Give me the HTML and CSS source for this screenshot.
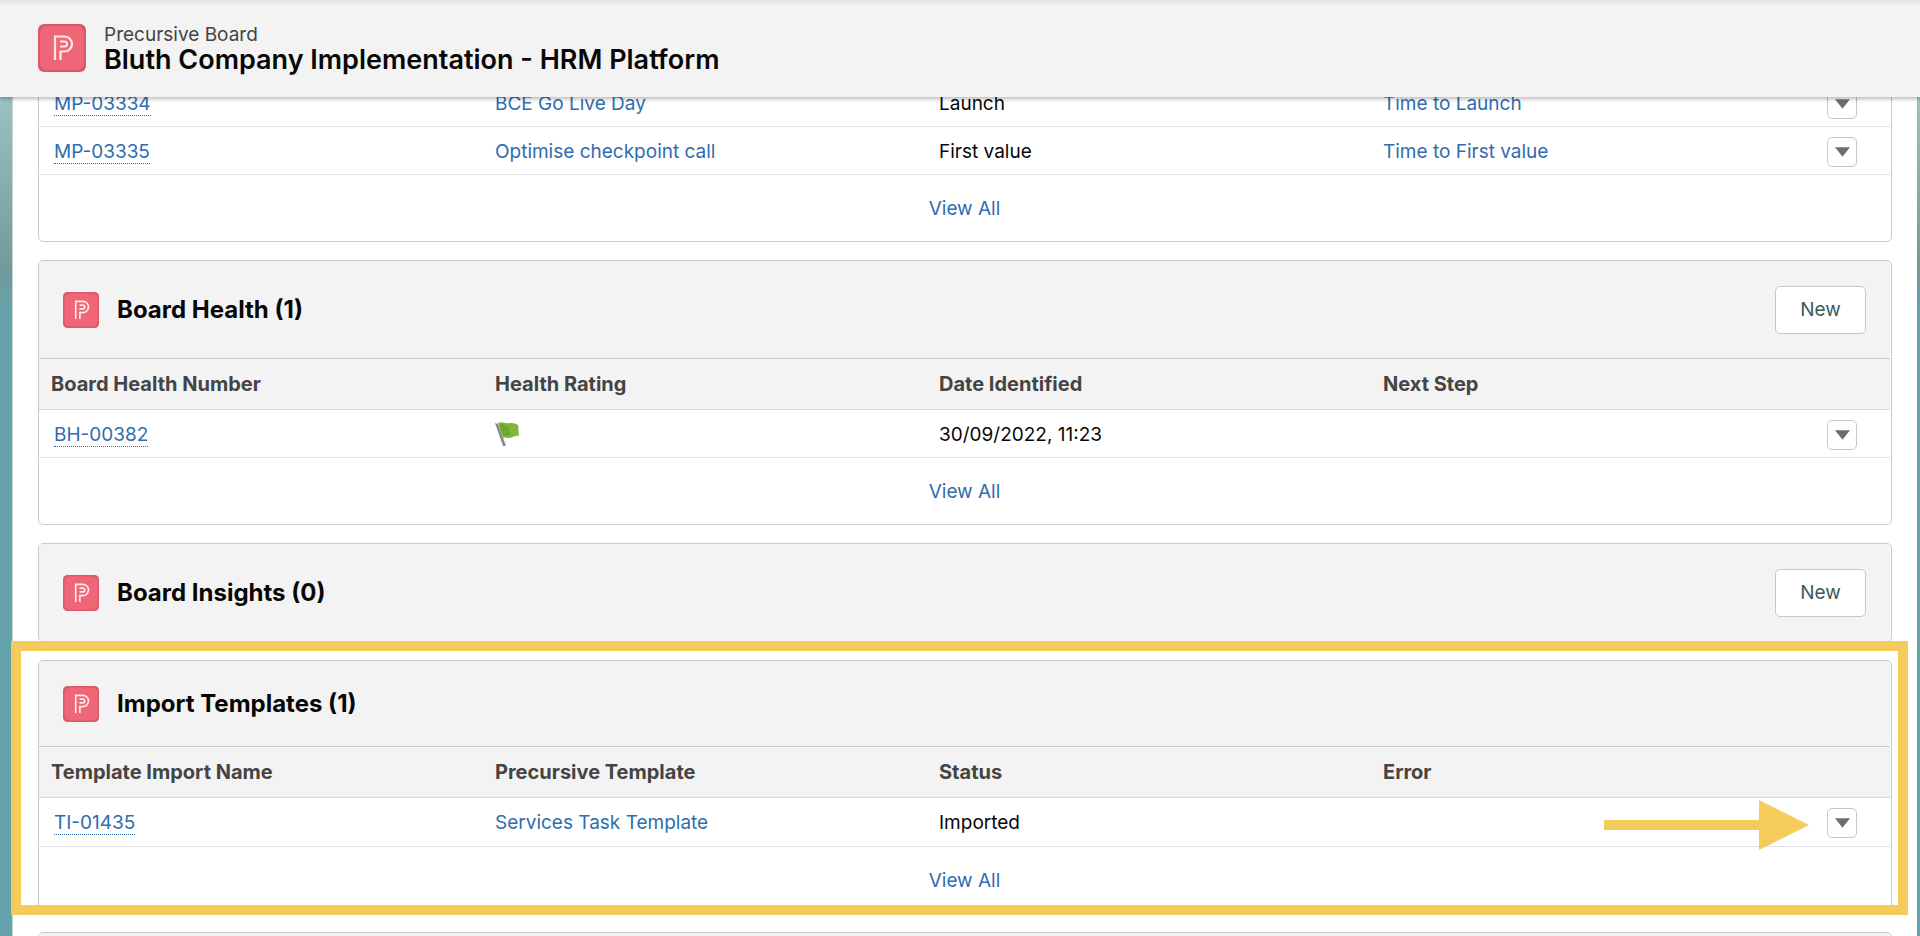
FILE: index.html
```
<!DOCTYPE html>
<html lang="en">
<head>
  <meta charset="UTF-8">
  <meta name="viewport" content="width=device-width, initial-scale=1.0">
  <title>Bluth Company Implementation - HRM Platform</title>
  <link rel="stylesheet" href="styles.css">
</head>
<body>
<!-- shared icons -->
<svg class="sprite" aria-hidden="true">
  <symbol id="logo" viewBox="0 0 48 48">
    <rect width="48" height="48" rx="6" fill="#d9586b"/>
    <rect x="2" y="2" width="44" height="44" rx="7" fill="#ef6777"/>
    <path d="M17 36V12.500H26.500a7.500 7.500 0 0 1 0 15H22.500V36M22 17.500H26.500a2.500 2.500 0 0 1 0 5H22" fill="none" stroke="#fde8ea" stroke-width="2.200"/>
  </symbol>
  <symbol id="down" viewBox="0 0 16 10">
    <path d="M0 0h16L8 10z" fill="#706e6b"/>
  </symbol>
</svg>

<header class="page-header">
  <svg class="logo-lg"><use href="#logo"/></svg>
  <div>
    <p class="entity">Precursive Board</p>
    <h1>Bluth Company Implementation - HRM Platform</h1>
  </div>
</header>

<main class="board">
  <section class="card">
    <table>
      <tbody>
        <tr>
          <td><a class="record" href="#">MP-03334</a></td>
          <td><a href="#">BCE Go Live Day</a></td>
          <td>Launch</td>
          <td><a href="#">Time to Launch</a></td>
          <td class="action"><button class="menu-btn" aria-label="Show actions"><svg><use href="#down"/></svg></button></td>
        </tr>
        <tr>
          <td><a class="record" href="#">MP-03335</a></td>
          <td><a href="#">Optimise checkpoint call</a></td>
          <td>First value</td>
          <td><a href="#">Time to First value</a></td>
          <td class="action"><button class="menu-btn" aria-label="Show actions"><svg><use href="#down"/></svg></button></td>
        </tr>
      </tbody>
    </table>
    <div class="card-footer"><a href="#">View All</a></div>
  </section>

  <section class="card">
    <div class="card-header">
      <svg class="logo"><use href="#logo"/></svg>
      <h2>Board Health (1)</h2>
      <button class="new-btn">New</button>
    </div>
    <table>
      <thead>
        <tr>
          <th>Board Health Number</th>
          <th>Health Rating</th>
          <th>Date Identified</th>
          <th>Next Step</th>
          <th class="action"></th>
        </tr>
      </thead>
      <tbody>
        <tr>
          <td><a class="record" href="#">BH-00382</a></td>
          <td>
            <svg class="flag" viewBox="0 0 26 26" role="img" aria-label="Green">
              <path d="M0 1l3 1 8 22H8z" fill="#8a8a8a"/>
              <path d="M3 1c4-2 7 1 11 0 3 0 6 0 9 2l1 11c-4-1-6 2-10 2-3 0-4-1-6 0z" fill="#7db83a"/>
              <path d="M4 3c4-1 6 0 9 1l2 9c-3 1-4 1-7 1z" fill="#6ea82f"/>
            </svg>
          </td>
          <td>30/09/2022, 11:23</td>
          <td></td>
          <td class="action"><button class="menu-btn" aria-label="Show actions"><svg><use href="#down"/></svg></button></td>
        </tr>
      </tbody>
    </table>
    <div class="card-footer"><a href="#">View All</a></div>
  </section>

  <section class="card">
    <div class="card-header">
      <svg class="logo"><use href="#logo"/></svg>
      <h2>Board Insights (0)</h2>
      <button class="new-btn">New</button>
    </div>
  </section>

  <section class="card import">
    <div class="card-header">
      <svg class="logo"><use href="#logo"/></svg>
      <h2>Import Templates (1)</h2>
    </div>
    <table>
      <thead>
        <tr>
          <th>Template Import Name</th>
          <th>Precursive Template</th>
          <th>Status</th>
          <th>Error</th>
          <th class="action"></th>
        </tr>
      </thead>
      <tbody>
        <tr>
          <td><a class="record" href="#">TI-01435</a></td>
          <td><a href="#">Services Task Template</a></td>
          <td>Imported</td>
          <td></td>
          <td class="action">
            <button class="menu-btn" aria-label="Show actions"><svg><use href="#down"/></svg></button>
            <svg class="arrow" viewBox="0 0 205 50"><path d="M0 20h155V0l50 25-50 25V30H0z" fill="#f5cc5c"/></svg>
          </td>
        </tr>
      </tbody>
    </table>
    <div class="card-footer"><a href="#">View All</a></div>
    <div class="highlight"></div>
  </section>

  <section class="card">
    <div class="card-header"></div>
  </section>
</main>
</body>
</html>
```

FILE: styles.css
```
* {
  box-sizing: border-box;
}

body {
  margin: 0;
  height: 100vh;
  overflow: hidden;
  font-family: Inter, "Liberation Sans", sans-serif;
  font-size: 19px;
  line-height: 24px;
  color: #080707;
  background: linear-gradient(#9dc4c5 90px, #73999a 270px, #64a3ab 310px);
}

h1, h2, p {
  margin: 0;
}

a {
  color: #2f6cb0;
  text-decoration: none;
}

button {
  padding: 0;
  font: inherit;
  background: #fff;
  border: 1px solid #c9c7c5;
  border-radius: 5px;
}

.sprite {
  position: absolute;
  width: 0;
  height: 0;
}

/* header */
.page-header {
  position: relative;
  z-index: 2;
  display: flex;
  align-items: center;
  gap: 18px;
  height: 97px;
  padding: 0 38px 2px;
  background: linear-gradient(#e4e4e4, #f3f3f3 6px);
  box-shadow: 0 2px 4px rgba(0, 0, 0, .28);
}

.logo-lg {
  width: 48px;
  height: 48px;
}

.entity {
  color: #444;
}

h1 {
  font-size: 27px;
  font-weight: 600;
  line-height: 26px;
}

/* related lists */
.board {
  display: flex;
  flex-direction: column;
  gap: 18px;
  min-height: 100%;
  margin: -19px 3px 0 12px;
  padding: 0 25px;
  background: #fff;
  border-left: 1px solid #c9d3d3;
}

.card {
  position: relative;
  padding-right: 1px;
  background: #fff;
  border: 1px solid #c9c9c9;
  border-radius: 5px;
}

.card-header {
  display: flex;
  align-items: center;
  gap: 18px;
  height: 97px;
  padding: 0 24px;
  background: #f3f3f3;
  border-radius: 4px;
}

.import .card-header {
  height: 85px;
}

h2 {
  flex: 1;
  font-size: 24px;
  font-weight: 700;
  line-height: 30px;
}

.logo {
  width: 36px;
  height: 36px;
}

.new-btn {
  width: 91px;
  height: 48px;
  color: #3a5a5a;
}

table {
  width: 100%;
  table-layout: fixed;
  border-spacing: 0;
}

th, td {
  height: 48px;
  padding: 0 12px;
  text-align: left;
  border-bottom: 1px solid #e2e2e2;
}

td {
  padding-top: 2px;
}

.import td {
  height: 49px;
}

th {
  height: 52px;
  font-size: 20px;
  font-weight: 700;
  color: #444;
  background: #f3f3f3;
  border-top: 1px solid #c9c9c9;
  border-bottom-color: #d8d8d8;
}

.record {
  margin-left: 3px;
  border-bottom: 1px dotted #2f6cb0;
}

.action {
  position: relative;
  width: 75px;
}

.menu-btn {
  display: flex;
  align-items: center;
  justify-content: center;
  width: 30px;
  height: 30px;
}

.menu-btn svg {
  width: 15px;
  height: 10px;
}

.flag {
  display: block;
  width: 26px;
  height: 26px;
}

.card-footer {
  padding: 22px 0 20px;
  text-align: center;
}

/* callout over the import list */
.highlight {
  position: absolute;
  top: -20px;
  right: -17px;
  bottom: -2px;
  left: -28px;
  border: 10px solid #f5cc5c;
}

.arrow {
  position: absolute;
  right: 81px;
  top: 2px;
  width: 205px;
  height: 50px;
}
```
